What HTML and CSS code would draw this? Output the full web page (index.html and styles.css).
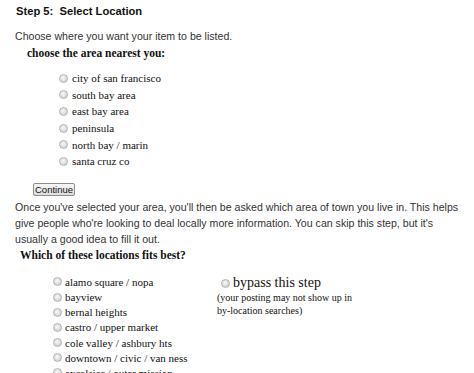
FILE: index.html
```html
<!DOCTYPE html>
<html>
<head>
<meta charset="utf-8">
<title>Step 5: Select Location</title>
<link rel="stylesheet" href="styles.css">
</head>
<body>
<div class="page">
  <h2 class="step">Step 5:&nbsp; Select Location</h2>
  <p class="intro">Choose where you want your item to be listed.</p>
  <h3 class="area-title">choose the area nearest you:</h3>
  <ul class="areas">
    <li><span class="radio"></span><span>city of san francisco</span></li>
    <li><span class="radio"></span><span>south bay area</span></li>
    <li><span class="radio"></span><span>east bay area</span></li>
    <li><span class="radio"></span><span>peninsula</span></li>
    <li><span class="radio"></span><span>north bay / marin</span></li>
    <li><span class="radio"></span><span>santa cruz co</span></li>
  </ul>
  <div class="actions"><button class="btn" type="button">Continue</button></div>
  <p class="info">Once you've selected your area, you'll then be asked which area of town you live in. This helps give people who're looking to deal locally more information. You can skip this step, but it's<br>usually a good idea to fill it out.</p>
  <h3 class="loc-title">Which of these locations fits best?</h3>
  <div class="locs">
    <ul class="hoods">
      <li><span class="radio"></span><span>alamo square / nopa</span></li>
      <li><span class="radio"></span><span>bayview</span></li>
      <li><span class="radio"></span><span>bernal heights</span></li>
      <li><span class="radio"></span><span>castro / upper market</span></li>
      <li><span class="radio"></span><span>cole valley / ashbury hts</span></li>
      <li><span class="radio"></span><span>downtown / civic / van ness</span></li>
      <li><span class="radio"></span><span>excelsior / outer mission</span></li>
    </ul>
    <div class="bypass">
      <div class="bypass-row"><span class="radio"></span><span>bypass this step</span></div>
      <div class="bypass-note">(your posting may not show up in<br>by-location searches)</div>
    </div>
  </div>
</div>
</body>
</html>
```
FILE: styles.css
```css
html, body {
  margin: 0;
  padding: 0;
  background: #fff;
  overflow: hidden;
}
body {
  font-family: "Liberation Sans", Arial, sans-serif;
  color: #333;
}
.page {
  padding: 4px 0 0 15px;
}
.step {
  margin: 0 0 0 1px;
  font-size: 11.2px;
  font-weight: bold;
  line-height: 14px;
  color: #111;
}
.intro {
  margin: 10px 0 0 0;
  font-size: 10.6px;
  line-height: 16px;
}
.area-title {
  margin: 1px 0 0 12px;
  font-family: "Liberation Serif", "Times New Roman", serif;
  font-size: 11.5px;
  font-weight: bold;
  line-height: 16px;
  color: #111;
}
.areas, .hoods {
  list-style: none;
  margin: 0;
  padding: 0;
  font-family: "Liberation Serif", "Times New Roman", serif;
  font-size: 11px;
  color: #111;
}
.areas {
  margin-top: 9px;
  padding-left: 44px;
}
.areas li {
  display: flex;
  align-items: center;
  gap: 4px;
  height: 16.6px;
}
.radio {
  display: inline-block;
  width: 9px;
  height: 9px;
  border-radius: 50%;
  box-sizing: border-box;
  border: 1px solid #b4b4b4;
  background: radial-gradient(circle at 45% 40%, #fafafa 0, #e2e2e2 45%, #c4c4c4 100%);
  flex: none;
}
.actions {
  margin-top: 13px;
  padding-left: 18px;
}
.btn {
  display: block;
  width: 42px;
  height: 13px;
  padding: 0;
  margin: 0;
  font-family: "Liberation Sans", Arial, sans-serif;
  font-size: 9.5px;
  line-height: 11px;
  color: #111;
  border: 1px solid #8e8e8e;
  border-radius: 2px;
  background: linear-gradient(#f6f6f6, #dedede);
}
.info {
  margin: 3.7px 0 0 0;
  font-size: 10.6px;
  line-height: 16px;
  width: 456px;
}
.loc-title {
  margin: 0 0 0 5px;
  font-family: "Liberation Serif", "Times New Roman", serif;
  font-size: 11.5px;
  font-weight: bold;
  line-height: 16px;
  color: #111;
}
.locs {
  display: flex;
  margin-top: 11px;
}
.hoods {
  padding-left: 38px;
  width: 164px;
}
.hoods li {
  display: flex;
  align-items: center;
  gap: 3px;
  height: 15.2px;
}
.bypass {
  font-family: "Liberation Serif", "Times New Roman", serif;
  color: #111;
}
.bypass-row {
  display: flex;
  align-items: center;
  gap: 3px;
  padding-left: 4px;
  height: 18px;
  font-size: 14px;
}
.bypass-note {
  font-size: 10px;
  line-height: 12.5px;
  margin-top: 0;
}
```
